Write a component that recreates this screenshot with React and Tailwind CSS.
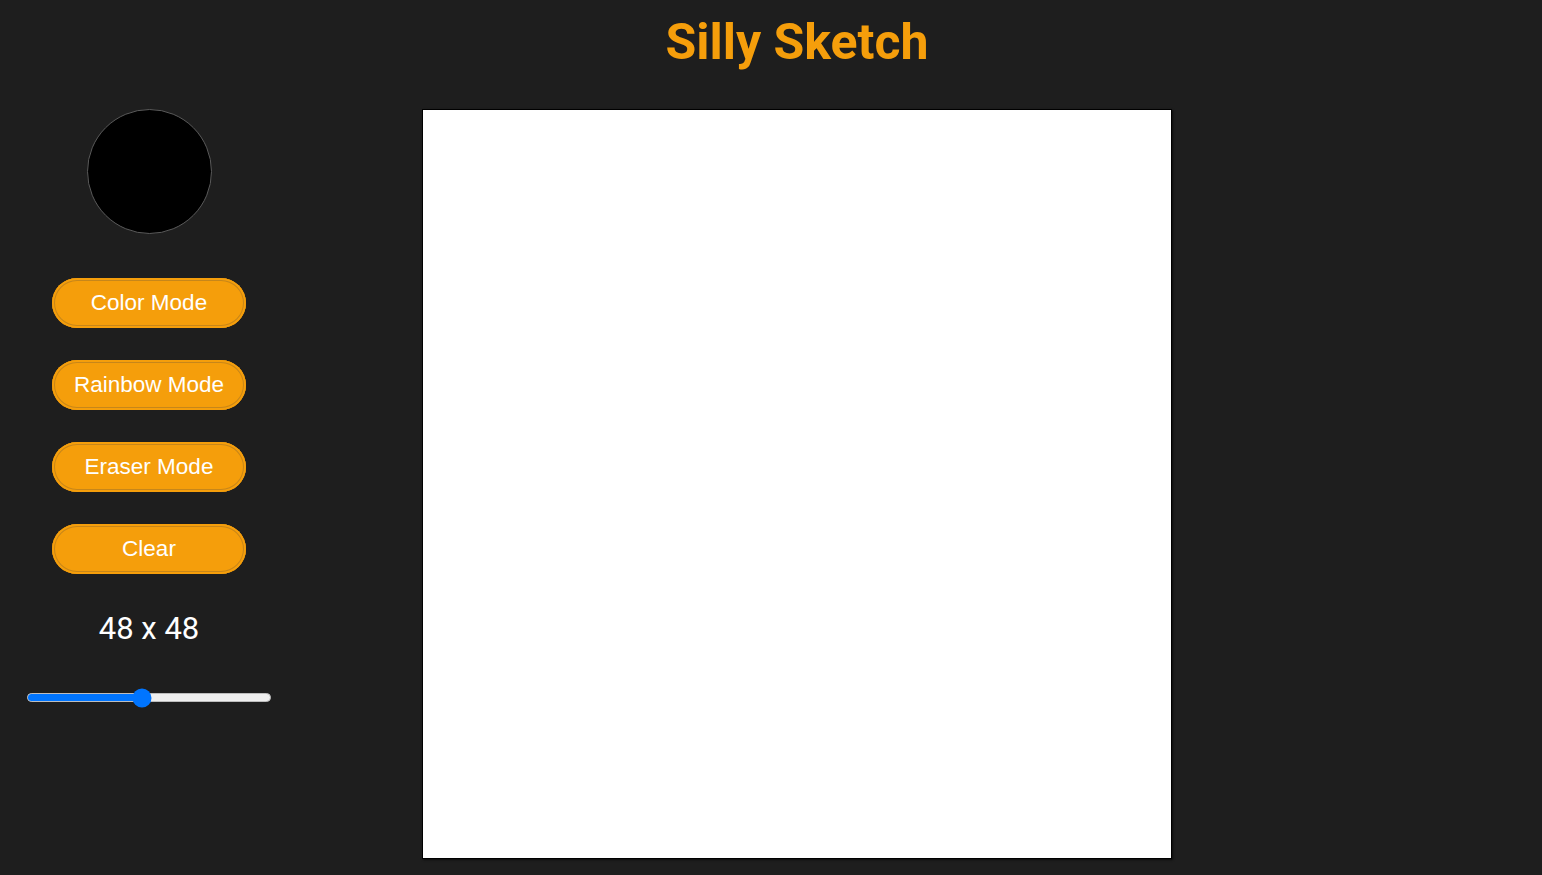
import React, { useState } from 'react';

const MODES = ['Color Mode', 'Rainbow Mode', 'Eraser Mode', 'Clear'];

function ModeButton({ label, onClick }) {
  return (
    <button
      onClick={onClick}
      className="w-[194px] h-[50px] rounded-full bg-[#f59e0b] text-white text-[22.5px] leading-none shadow-[inset_0_0_0_2px_#f59e0b,inset_0_0_0_3px_#c7861a] font-['Liberation_Sans',Arial,sans-serif]"
    >
      {label}
    </button>
  );
}

export default function App() {
  const [size] = useState(48);
  const pct = (size - 2) / (100 - 2);

  return (
    <div className="min-h-screen w-full bg-[#1e1e1e] text-white font-['Roboto',sans-serif]">
      {/* Header */}
      <header className="pl-[52px] pt-[12px] text-center">
        <h1 className="text-[50px] font-bold leading-[60px] text-[#f59e0b]">Silly Sketch</h1>
      </header>

      <main className="flex mt-[37px]">
        {/* Sidebar */}
        <aside className="w-[298px] flex flex-col items-center">
          <div className="w-[125px] h-[125px] rounded-full bg-black border border-[#5a5a5a]" />

          <div className="mt-[44px] flex flex-col gap-[32px]">
            {MODES.map((m) => (
              <ModeButton key={m} label={m} />
            ))}
          </div>

          <p className="mt-[39px] text-[31px] leading-none">
            {size} x {size}
          </p>

          <div role="slider" aria-valuenow={size} className="relative mt-[49px] w-[244px] h-[9px] rounded-full bg-[#efefef] border border-[#bdbdbd]">
            <div className="h-full rounded-full bg-[#0075ff]" style={{ width: `${pct * 100}%` }} />
            <div
              className="absolute top-1/2 w-[19px] h-[19px] -translate-x-1/2 -translate-y-1/2 rounded-full bg-[#0075ff]"
              style={{ left: `${pct * 100}%` }}
            />
          </div>
        </aside>

        {/* Canvas */}
        <section className="ml-[124px]">
          <div className="w-[750px] h-[750px] bg-white border border-black shadow-[1px_1px_2px_rgba(0,0,0,0.6)]" />
        </section>
      </main>
    </div>
  );
}
